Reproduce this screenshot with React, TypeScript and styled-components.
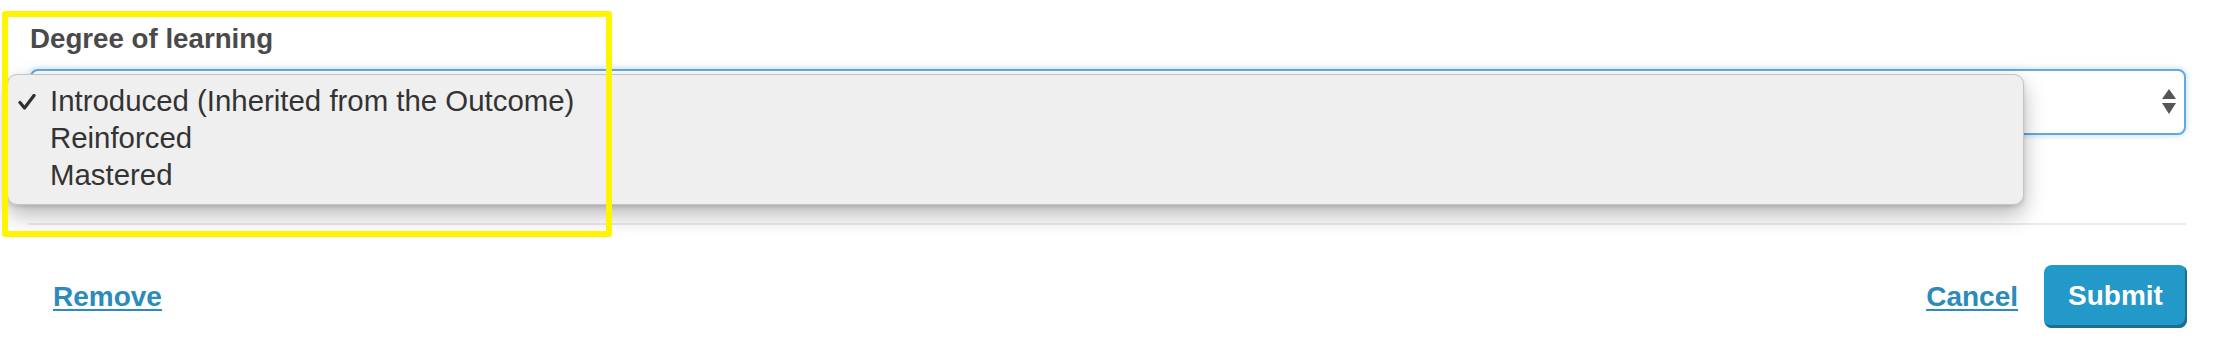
import React from 'react';
import styled, { createGlobalStyle } from 'styled-components';

const GlobalStyle = createGlobalStyle`
  html, body {
    margin: 0;
    padding: 0;
    background: #ffffff;
  }
  body {
    font-family: "Liberation Sans", Arial, sans-serif;
    color: #4a4a4a;
  }
`;

const options = [
  { label: 'Introduced (Inherited from the Outcome)', selected: true },
  { label: 'Reinforced', selected: false },
  { label: 'Mastered', selected: false },
];

export default function App() {
  return (
    <>
      <GlobalStyle />
      <Page>
        <Field>
          <Label>Degree of learning</Label>
          <SelectBox>
            <Arrows viewBox="0 0 14 26" aria-hidden="true">
              <path d="M7 0 L14 10 L0 10 Z" fill="#555" />
              <path d="M0 14 L14 14 L7 25 Z" fill="#555" />
            </Arrows>
            <Menu role="listbox">
              {options.map((o) => (
                <MenuItem key={o.label} role="option" aria-selected={o.selected}>
                  <CheckSlot>
                    {o.selected && (
                      <svg width="18" height="16" viewBox="0 0 18 16" aria-hidden="true">
                        <path
                          d="M2 8.5 L6.5 14 L16 1.5"
                          fill="none"
                          stroke="#2f2f2f"
                          strokeWidth="3.2"
                          strokeLinecap="round"
                          strokeLinejoin="round"
                        />
                      </svg>
                    )}
                  </CheckSlot>
                  {o.label}
                </MenuItem>
              ))}
            </Menu>
          </SelectBox>
        </Field>
        <Divider />
        <Footer>
          <TextLink href="#">Remove</TextLink>
          <Actions>
            <TextLink href="#">Cancel</TextLink>
            <SubmitButton type="button">Submit</SubmitButton>
          </Actions>
        </Footer>
        <Highlight />
      </Page>
    </>
  );
}

const Page = styled.div`
  position: relative;
  width: 2216px;
  height: 356px;
  padding: 23px 30px 0 30px;
  box-sizing: border-box;
`;

const Field = styled.div`
  display: flex;
  flex-direction: column;
`;

const Label = styled.label`
  font-size: 27.7px;
  font-weight: bold;
  color: #4a4a4a;
  line-height: normal;
  margin-bottom: 14px;
`;

const SelectBox = styled.div`
  position: relative;
  height: 66px;
  box-sizing: border-box;
  border: 2px solid #62a9e4;
  border-radius: 8px;
  background: #fff;
  box-shadow: 0 0 6px rgba(98, 169, 228, 0.45);
  display: flex;
  align-items: center;
  justify-content: flex-end;
  padding-right: 8px;
`;

const Arrows = styled.svg`
  width: 14px;
  height: 26px;
`;

const Menu = styled.ul`
  position: absolute;
  left: -25px;
  top: 3px;
  width: 2017px;
  height: 131px;
  box-sizing: border-box;
  margin: 0;
  padding: 7px 0 0 0;
  list-style: none;
  background: #efefef;
  border: 1px solid #c4c4c4;
  border-radius: 10px;
  box-shadow: 0 10px 22px rgba(0, 0, 0, 0.28), 0 2px 4px rgba(0, 0, 0, 0.12);
  z-index: 2;
`;

const MenuItem = styled.li`
  display: flex;
  align-items: center;
  height: 37px;
  font-size: 29.4px;
  line-height: 37px;
  color: #333333;
`;

const CheckSlot = styled.span`
  display: flex;
  align-items: center;
  width: 42px;
  height: 37px;
  padding: 2px 0 0 10px;
  box-sizing: border-box;
`;

const Divider = styled.hr`
  margin: 88px 0 0 -2px;
  border: 0;
  height: 2px;
  background: #ebebeb;
`;

const Footer = styled.div`
  display: flex;
  align-items: center;
  justify-content: space-between;
  margin-top: 40px;
  padding-left: 23px;
  margin-right: -1px;
`;

const Actions = styled.div`
  display: flex;
  align-items: center;
  gap: 26px;
`;

const TextLink = styled.a`
  font-size: 28px;
  font-weight: bold;
  color: #2b8bbb;
  text-decoration: underline;
  text-decoration-thickness: 2px;
  text-underline-offset: 3px;
`;

const SubmitButton = styled.button`
  width: 143px;
  height: 63px;
  border: 0;
  border-radius: 8px;
  background: #2299c9;
  box-shadow: inset -2px -3px 0 #1c6e90;
  color: #ffffff;
  font-family: "Liberation Sans", Arial, sans-serif;
  font-size: 28px;
  font-weight: bold;
  padding: 0 0 2px 0;
  cursor: pointer;
`;

const Highlight = styled.div`
  position: absolute;
  left: 2px;
  top: 11px;
  width: 610px;
  height: 226px;
  box-sizing: border-box;
  border: 6px solid #fff500;
  border-radius: 3px;
  pointer-events: none;
  z-index: 3;
`;
